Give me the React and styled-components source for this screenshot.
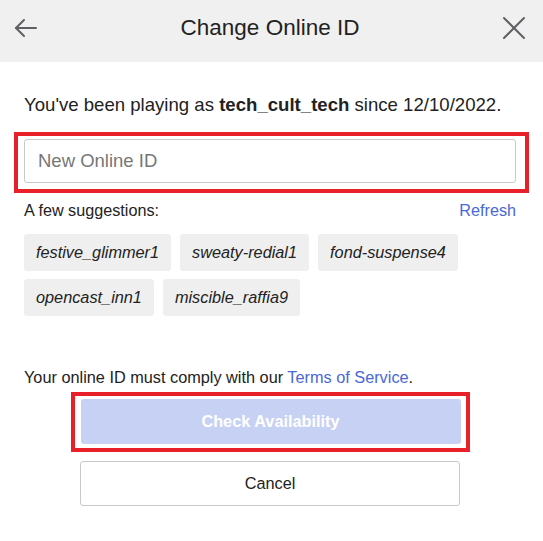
import React from "react";
import styled, { createGlobalStyle } from "styled-components";

const GlobalStyle = createGlobalStyle`
  body {
    margin: 0;
    background: #ffffff;
    font-family: "Liberation Sans", Arial, sans-serif;
    color: #222222;
  }
`;

const Page = styled.div`
  width: 543px;
  height: 541px;
  display: flex;
  flex-direction: column;
  background: #ffffff;
  overflow: hidden;
`;

// top bar with back arrow, title and close
const Header = styled.div`
  height: 62px;
  flex-shrink: 0;
  display: flex;
  align-items: center;
  justify-content: space-between;
  padding: 0 17px 0 14px;
  background: #f0f0f0;
  box-sizing: border-box;
`;

const Title = styled.div`
  font-size: 22.5px;
  color: #222;
  margin-top: -7px;
`;

const IconButton = styled.button`
  width: 24px;
  height: 24px;
  padding: 0;
  border: none;
  background: none;
  display: flex;
  align-items: center;
  justify-content: center;
  margin-top: -7px;
  color: #5f6063;
`;

const Body = styled.div`
  display: flex;
  flex-direction: column;
  padding: 0 27px 0 24px;
`;

const Intro = styled.p`
  margin: 33px 0 0;
  font-size: 18.6px;
  line-height: 20px;
  white-space: nowrap;

  b {
    font-weight: bold;
  }
`;

// red annotation box drawn round a highlighted control
const Highlight = styled.div`
  border: 4px solid #e8202a;
  padding: ${(p) => p.$pad};
  margin: ${(p) => p.$margin};
  display: flex;
  flex-direction: column;
`;

const Input = styled.input`
  height: 44px;
  box-sizing: border-box;
  border: 1px solid #c9c9c9;
  border-radius: 3px;
  padding: 0 13px;
  font-family: inherit;
  font-size: 18.5px;
  color: #222;
  outline: none;

  &::placeholder {
    color: #777;
  }
`;

const SuggestHead = styled.div`
  display: flex;
  justify-content: space-between;
  align-items: center;
  margin-top: 8px;
  font-size: 16.2px;
  line-height: 18px;
`;

const Link = styled.a`
  color: #4a68d6;
  text-decoration: none;
  cursor: pointer;
`;

const ChipList = styled.div`
  display: flex;
  flex-wrap: wrap;
  gap: 8px 9px;
  margin-top: 15px;
`;

const Chip = styled.button`
  height: 37px;
  padding: 0 12px;
  border: none;
  border-radius: 3px;
  background: #efefef;
  font-family: inherit;
  font-style: italic;
  font-size: 16.3px;
  color: #222;
`;

const Terms = styled.p`
  margin: 52px 0 0;
  font-size: 16.3px;
  line-height: 18px;
`;

const ButtonStack = styled.div`
  display: flex;
  flex-direction: column;
  align-items: center;
  gap: 9px;
  margin-top: 6px;
`;

const Button = styled.button`
  width: 380px;
  height: 45px;
  box-sizing: border-box;
  border-radius: 3px;
  font-family: inherit;
  font-size: 16.3px;
  border: ${(p) => (p.$primary ? "none" : "1px solid #c8c8c8")};
  background: ${(p) => (p.$primary ? "#c7d1f3" : "#ffffff")};
  color: ${(p) => (p.$primary ? "#ffffff" : "#222222")};
  font-weight: ${(p) => (p.$primary ? "bold" : "normal")};
`;

const suggestions = [
  "festive_glimmer1",
  "sweaty-redial1",
  "fond-suspense4",
  "opencast_inn1",
  "miscible_raffia9",
];

export default function App() {
  return (
    <>
      <GlobalStyle />
      <Page>
        <Header>
          <IconButton aria-label="Back">
            <svg width="24" height="24" viewBox="0 0 24 24" fill="none" stroke="currentColor" strokeWidth="2" strokeLinecap="round" strokeLinejoin="round">
              <line x1="2" y1="12" x2="22" y2="12" />
              <polyline points="10,4 2,12 10,20" />
            </svg>
          </IconButton>
          <Title>Change Online ID</Title>
          <IconButton aria-label="Close">
            <svg width="24" height="24" viewBox="0 0 24 24" fill="none" stroke="currentColor" strokeWidth="2" strokeLinecap="round">
              <line x1="2" y1="2" x2="22" y2="22" />
              <line x1="22" y1="2" x2="2" y2="22" />
            </svg>
          </IconButton>
        </Header>
        <Body>
          <Intro>
            You've been playing as <b>tech_cult_tech</b> since 12/10/2022.
          </Intro>
          <Highlight $pad="3px 9px 6px 6px" $margin="17px -13px 0 -10px">
            <Input placeholder="New Online ID" />
          </Highlight>
          <SuggestHead>
            <span>A few suggestions:</span>
            <Link>Refresh</Link>
          </SuggestHead>
          <ChipList>
            {suggestions.map((s) => (
              <Chip key={s}>{s}</Chip>
            ))}
          </ChipList>
          <Terms>
            Your online ID must comply with our <Link>Terms of Service</Link>.
          </Terms>
          <ButtonStack>
            <Highlight $pad="3px 5px 4px 6px" $margin="0">
              <Button $primary>Check Availability</Button>
            </Highlight>
            <Button>Cancel</Button>
          </ButtonStack>
        </Body>
      </Page>
    </>
  );
}
